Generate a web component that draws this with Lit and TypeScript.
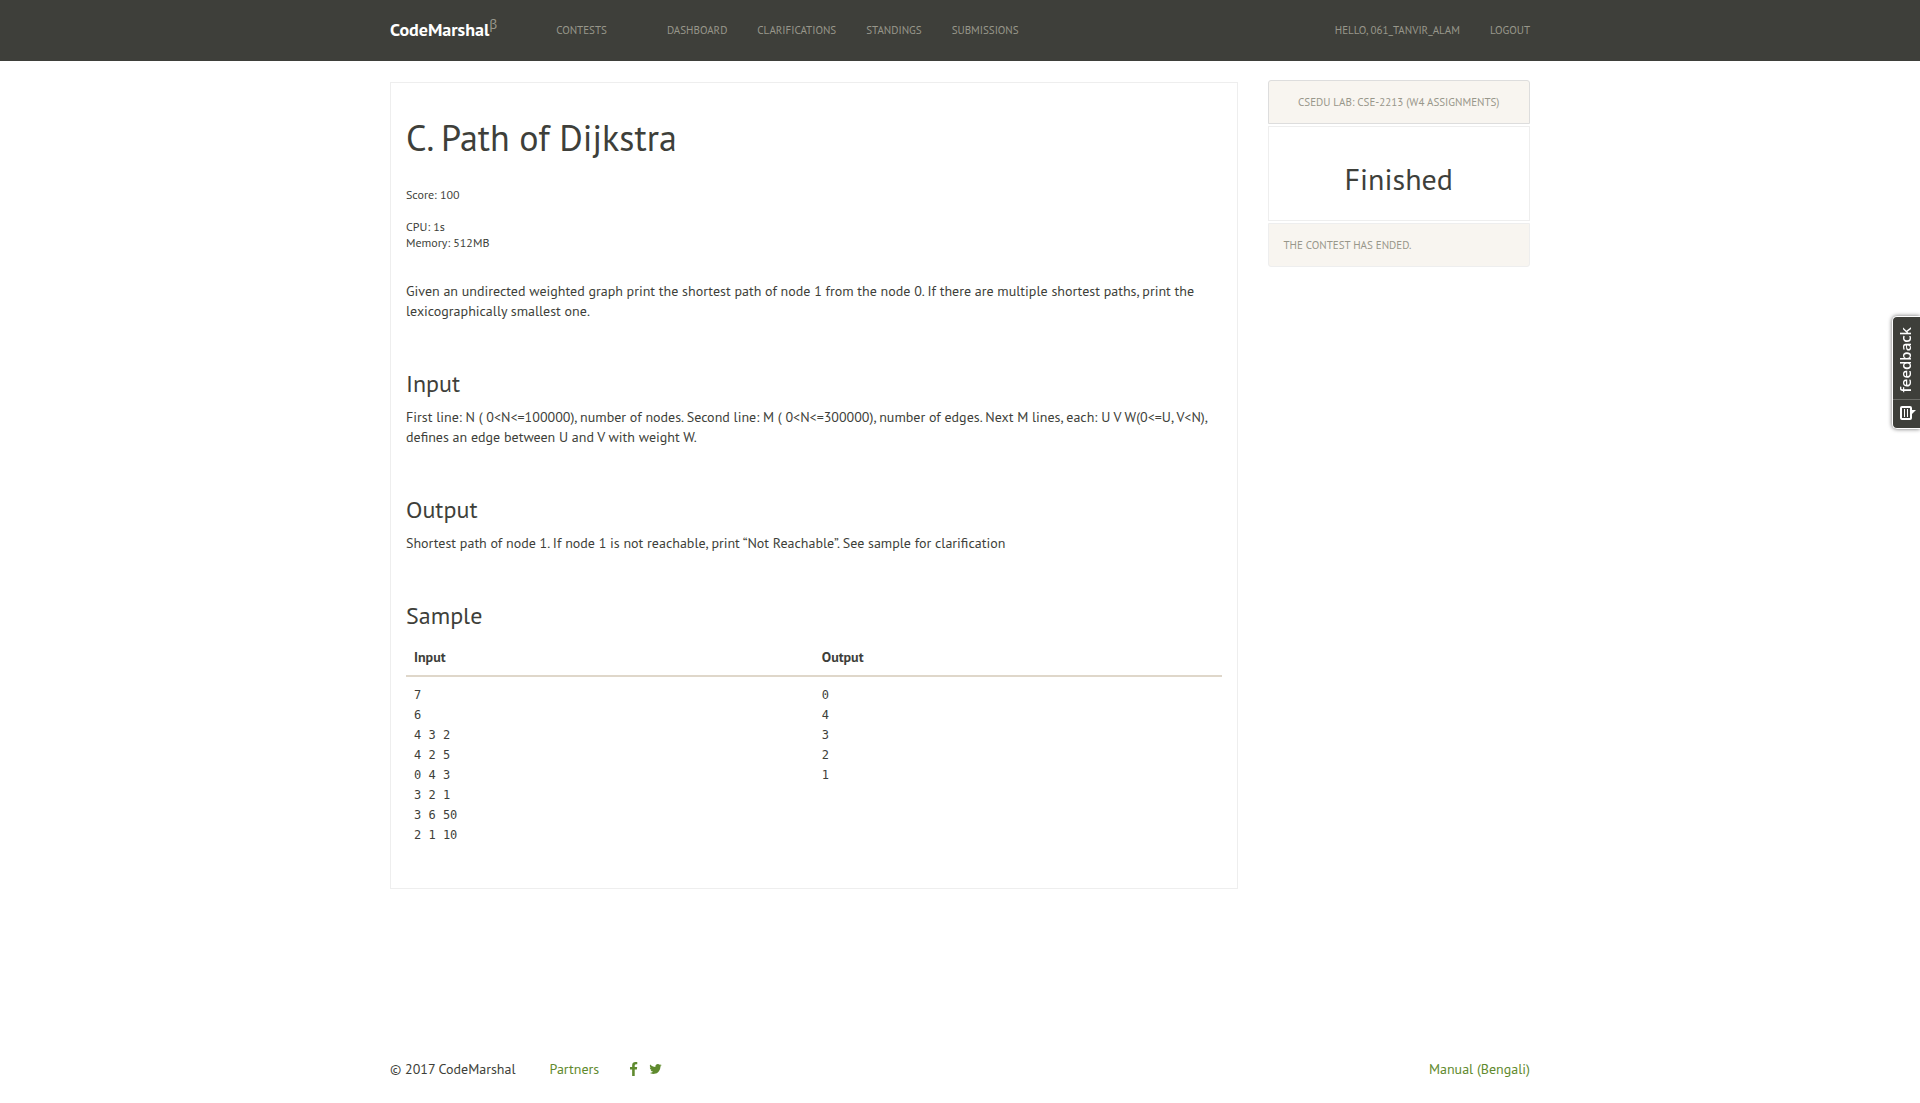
import { LitElement, html, css } from "lit";
import { customElement, property } from "lit/decorators.js";

interface NavLink {
  label: string;
  href: string;
}

@customElement("site-header")
class SiteHeader extends LitElement {
  @property() user = "";

  private contestLinks: NavLink[] = [
    { label: "Dashboard", href: "#dashboard" },
    { label: "Clarifications", href: "#clarifications" },
    { label: "Standings", href: "#standings" },
    { label: "Submissions", href: "#submissions" },
  ];

  static styles = css`
    :host {
      display: block;
      border-bottom: 1px solid #3e3f3a;
      background: #3e3f3a;
    }
    .inner {
      display: flex;
      align-items: center;
      box-sizing: border-box;
      max-width: 1170px;
      min-height: 60px;
      margin: 0 auto;
      padding: 0 15px;
    }
    a {
      text-decoration: none;
    }
    .brand {
      margin-right: 59px;
      color: #fff;
      font-size: 18px;
      font-weight: 700;
      line-height: 18px;
    }
    .beta {
      color: #98978b;
      font-size: 13px;
      font-weight: 400;
      line-height: 0;
    }
    .links {
      display: flex;
      gap: 30px;
    }
    .links.contest {
      margin-left: 60px;
    }
    .links.account {
      margin-left: auto;
    }
    .link {
      color: #98978b;
      font-size: 11px;
      line-height: 20px;
      text-transform: uppercase;
    }
  `;

  render() {
    return html`
      <header class="inner">
        <a class="brand" href="#home">CodeMarshal<sup class="beta">β</sup></a>
        <nav class="links"><a class="link" href="#contests">Contests</a></nav>
        <nav class="links contest">
          ${this.contestLinks.map((l) => html`<a class="link" href=${l.href}>${l.label}</a>`)}
        </nav>
        <nav class="links account">
          <a class="link" href="#profile">Hello, ${this.user}</a>
          <a class="link" href="#logout">Logout</a>
        </nav>
      </header>
    `;
  }
}

@customElement("problem-statement")
class ProblemStatement extends LitElement {
  private sampleInput = ["7", "6", "4 3 2", "4 2 5", "0 4 3", "3 2 1", "3 6 50", "2 1 10"];
  private sampleOutput = ["0", "4", "3", "2", "1"];

  static styles = css`
    :host {
      display: block;
    }
    .panel {
      padding: 31px 15px 35px;
      border: 1px solid #eee;
    }
    .title {
      margin: 0;
      font-size: 36px;
      font-weight: 400;
      line-height: 48px;
    }
    .limits {
      margin-top: 25px;
      font-size: 12px;
      line-height: 16px;
    }
    .limits p {
      margin: 0 0 16px;
    }
    .text {
      margin: 0;
      font-size: 14px;
      line-height: 20px;
    }
    .intro {
      margin-top: 30px;
    }
    .heading {
      margin: 48px 0 8px;
      font-size: 24px;
      font-weight: 400;
      line-height: 30px;
    }
    .sample {
      width: 100%;
      border-collapse: collapse;
      table-layout: fixed;
      font-size: 14px;
      line-height: 20px;
    }
    .sample th {
      padding: 8px;
      border-bottom: 2px solid #dfd7ca;
      font-weight: 700;
      text-align: left;
    }
    .sample td {
      padding: 8px;
      vertical-align: top;
    }
    .data {
      margin: 0;
      font-family: "DejaVu Sans Mono", monospace;
      font-size: 12px;
      line-height: 20px;
    }
  `;

  render() {
    return html`
      <article class="panel">
        <h1 class="title">C. Path of Dijkstra</h1>
        <div class="limits">
          <p>Score: 100</p>
          <p>CPU: 1s<br />Memory: 512MB</p>
        </div>
        <p class="text intro">
          Given an undirected weighted graph print the shortest path of node 1 from the node 0. If
          there are multiple shortest paths, print the lexicographically smallest one.
        </p>
        <h2 class="heading">Input</h2>
        <p class="text">
          First line: N ( 0&lt;N&lt;=100000), number of nodes. Second line: M ( 0&lt;N&lt;=300000),
          number of edges. Next M lines, each: U V W(0&lt;=U, V&lt;N), defines an edge between U and
          V with weight W.
        </p>
        <h2 class="heading">Output</h2>
        <p class="text">
          Shortest path of node 1. If node 1 is not reachable, print “Not Reachable”. See sample for
          clarification
        </p>
        <h2 class="heading">Sample</h2>
        <table class="sample">
          <thead>
            <tr>
              <th scope="col">Input</th>
              <th scope="col">Output</th>
            </tr>
          </thead>
          <tbody>
            <tr>
              <td><pre class="data">${this.sampleInput.join("\n")}</pre></td>
              <td><pre class="data">${this.sampleOutput.join("\n")}</pre></td>
            </tr>
          </tbody>
        </table>
      </article>
    `;
  }
}

@customElement("contest-status")
class ContestStatus extends LitElement {
  static styles = css`
    :host {
      display: flex;
      flex-direction: column;
      gap: 2px;
    }
    .strip {
      padding: 11px 15px;
      border: 1px solid #eee;
      background: #f8f5f0;
      color: #98978b;
      font-size: 11px;
      line-height: 20px;
      text-transform: uppercase;
    }
    .name {
      border-color: #ddd;
      border-radius: 3px 3px 0 0;
      text-align: center;
      text-decoration: none;
    }
    .note {
      margin: 0;
      border-radius: 0 0 3px 3px;
    }
    .state {
      margin: 0;
      padding: 32px 15px 21px;
      border: 1px solid #eee;
      font-size: 30px;
      font-weight: 400;
      line-height: 40px;
      text-align: center;
    }
  `;

  render() {
    return html`
      <a class="strip name" href="#contest">CSEDU Lab: CSE-2213 (W4 Assignments)</a>
      <h2 class="state">Finished</h2>
      <p class="strip note">The contest has ended.</p>
    `;
  }
}

@customElement("site-footer")
class SiteFooter extends LitElement {
  static styles = css`
    :host {
      display: flex;
      align-items: center;
      font-size: 14px;
      line-height: 20px;
    }
    a {
      color: #5f8a2e;
      text-decoration: none;
    }
    .partners {
      margin: 0 30px 0 34px;
    }
    .social {
      display: flex;
      margin-right: 11px;
    }
    .icon {
      display: block;
      height: 14px;
      fill: currentColor;
    }
    .manual {
      margin-left: auto;
    }
  `;

  render() {
    return html`
      <span>© 2017 CodeMarshal</span>
      <a class="partners" href="#partners">Partners</a>
      <a class="social" href="#facebook" aria-label="Facebook">
        <svg class="icon" width="9" viewBox="0 0 1024 1664" aria-hidden="true">
          <path
            d="M959 12v264h-157q-86 0-116 36t-30 108v189h293l-39 296h-254v759h-306v-759h-255v-296h255v-218q0-186 104-288.500t277-102.500q147 0 228 12z"
          />
        </svg>
      </a>
      <a class="social" href="#twitter" aria-label="Twitter">
        <svg class="icon" width="13" viewBox="0 0 1664 1792" aria-hidden="true">
          <path
            d="M1620 408q-67 98-162 167 1 14 1 42 0 130-38 259.500t-115.500 248.500-184.500 210.500-258 146-323 54.500q-271 0-496-145 35 4 78 4 225 0 401-138-105-2-188-64.500t-114-159.500q33 5 61 5 43 0 85-11-112-23-185.500-111.500t-73.500-205.500v-4q68 38 146 41-66-44-105-115t-39-154q0-88 44-163 121 149 294.500 238.500t371.500 99.500q-8-38-8-74 0-134 94.500-228.500t228.500-94.500q140 0 236 102 109-21 205-78-37 115-142 178 93-10 186-50z"
          />
        </svg>
      </a>
      <a class="manual" href="#manual">Manual (Bengali)</a>
    `;
  }
}

@customElement("feedback-tab")
class FeedbackTab extends LitElement {
  static styles = css`
    :host {
      position: fixed;
      top: 316px;
      right: 0;
    }
    .tab {
      display: flex;
      flex-direction: column;
      align-items: center;
      padding: 0;
      border: 1px solid #fff;
      border-right: 0;
      border-radius: 5px 0 0 5px;
      background: #3e3f3a;
      box-shadow: 0 0 4px rgba(0, 0, 0, 0.6);
      color: #fff;
      cursor: pointer;
    }
    .label {
      padding: 6px 1px 10px 4px;
      font-family: "Noto Sans", sans-serif;
      font-size: 15px;
      font-weight: 500;
      line-height: 22px;
      writing-mode: vertical-rl;
      transform: rotate(180deg);
    }
    .mark {
      align-self: stretch;
      padding: 6px 4px 8px 7px;
      border-top: 1px solid #6b6c67;
    }
    .bubble {
      display: block;
    }
  `;

  render() {
    return html`
      <button class="tab" type="button">
        <span class="label">feedback</span>
        <span class="mark">
          <svg class="bubble" width="16" height="14" viewBox="0 0 16 14" aria-hidden="true">
            <rect x="1" y="1" width="10" height="12" rx="1" fill="none" stroke="#fff" stroke-width="2" />
            <path d="M11 4h5l-4 4z" fill="#fff" />
            <path d="M4.500 3v8M7.500 3v8" stroke="#fff" stroke-width="1" />
          </svg>
        </span>
      </button>
    `;
  }
}

@customElement("app-root")
class AppRoot extends LitElement {
  static styles = css`
    :host {
      display: flex;
      flex-direction: column;
      min-height: 100vh;
      background: #fff;
      color: #3e3f3a;
      font-family: "PT Sans", "Noto Sans", sans-serif;
      font-size: 14px;
      line-height: 20px;
    }
    .container {
      box-sizing: border-box;
      width: 100%;
      max-width: 1170px;
      margin: 0 auto;
      padding: 0 15px;
    }
    .columns {
      display: grid;
      grid-template-columns: repeat(12, 1fr);
      gap: 30px;
      align-items: start;
      padding-top: 19px;
    }
    .main {
      grid-column: span 9;
      margin-top: 2px;
    }
    .side {
      grid-column: span 3;
    }
    .footer {
      margin-top: auto;
      padding-bottom: 24px;
    }
  `;

  render() {
    return html`
      <site-header user="061_Tanvir_Alam"></site-header>
      <main class="container columns">
        <problem-statement class="main"></problem-statement>
        <contest-status class="side"></contest-status>
      </main>
      <div class="container footer"><site-footer></site-footer></div>
      <feedback-tab></feedback-tab>
    `;
  }
}
